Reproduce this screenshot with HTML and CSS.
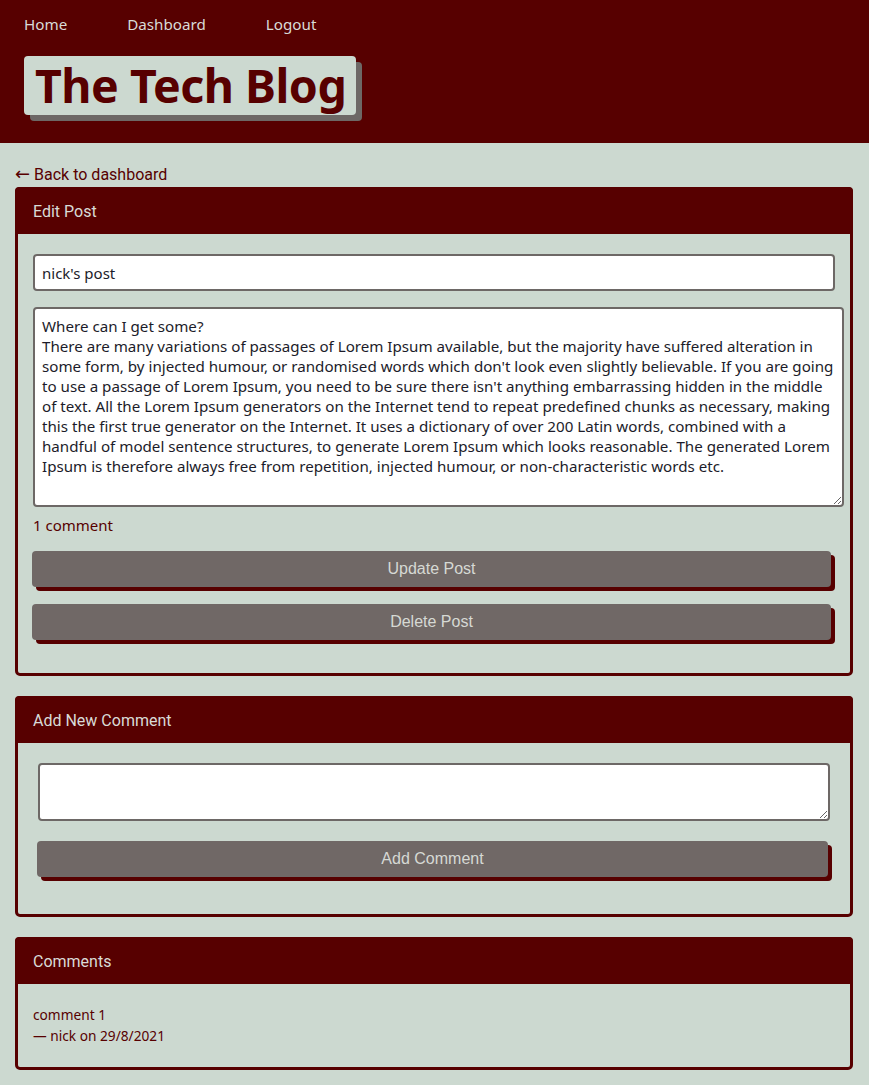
FILE: index.html
```html
<!DOCTYPE html>
<html>
<head>
<meta charset="utf-8">
<link rel="stylesheet" href="styles.css">
</head>
<body>
<header class="site-header">
  <nav class="nav">
    <a href="#" class="nav-link">Home</a>
    <a href="#" class="nav-link">Dashboard</a>
    <a href="#" class="nav-link">Logout</a>
  </nav>
  <h1 class="brand">The Tech Blog</h1>
</header>
<main class="main">
  <a href="#" class="back"><span class="arrow">&larr;</span> Back to dashboard</a>
  <section class="card">
    <div class="card-header">Edit Post</div>
    <div class="card-body edit-body">
      <input class="field" type="text" value="nick's post">
      <textarea class="field post-text">Where can I get some?
There are many variations of passages of Lorem Ipsum available, but the majority have suffered alteration in some form, by injected humour, or randomised words which don't look even slightly believable. If you are going to use a passage of Lorem Ipsum, you need to be sure there isn't anything embarrassing hidden in the middle of text. All the Lorem Ipsum generators on the Internet tend to repeat predefined chunks as necessary, making this the first true generator on the Internet. It uses a dictionary of over 200 Latin words, combined with a handful of model sentence structures, to generate Lorem Ipsum which looks reasonable. The generated Lorem Ipsum is therefore always free from repetition, injected humour, or non-characteristic words etc.</textarea>
      <p class="count">1 comment</p>
      <button class="btn">Update Post</button>
      <button class="btn">Delete Post</button>
    </div>
  </section>
  <section class="card">
    <div class="card-header">Add New Comment</div>
    <div class="card-body comment-body">
      <textarea class="field comment-text"></textarea>
      <button class="btn">Add Comment</button>
    </div>
  </section>
  <section class="card">
    <div class="card-header">Comments</div>
    <div class="card-body list-body">
      <div class="comment">
        <p class="comment-text-line">comment 1</p>
        <p class="comment-meta">&mdash; nick on 29/8/2021</p>
      </div>
    </div>
  </section>
</main>
</body>
</html>
```
FILE: styles.css
```css
* { box-sizing: border-box; }
html, body { margin: 0; padding: 0; }
body {
  background: #ccd9d0;
  font-family: "Noto Sans", "DejaVu Sans", sans-serif;
  color: #570000;
}
.site-header {
  background: #570000;
  height: 143px;
  padding: 13px 24px 0;
}
.nav { display: flex; height: 22px; align-items: center; }
.nav-link {
  color: #d9dbd7;
  text-decoration: none;
  font-size: 15.2px;
  margin-right: 60px;
}
.brand {
  display: inline-block;
  margin: 21px 0 0;
  background: #ccd9d0;
  color: #570000;
  font-size: 46.5px;
  line-height: 59px;
  height: 59px;
  padding: 0 10px 0 11px;
  border-radius: 4px;
  box-shadow: 6px 6px 0 #6d6866;
  letter-spacing: -0.5px;
}
.main { padding: 22px 16px 16px 15px; }
.back {
  display: block;
  font-family: Roboto, sans-serif;
  font-size: 16px;
  color: #570000;
  text-decoration: none;
  line-height: 20px;
  margin-bottom: 2px;
}
.arrow { font-family: "DejaVu Sans", sans-serif; font-size: 18px; line-height: 16px; }
.card {
  border: 3px solid #570000;
  border-radius: 5px;
  margin-bottom: 20px;
}
.card-header {
  background: #570000;
  color: #d9dbd7;
  line-height: 44px;
  margin: -3px -3px 0;
  padding: 3px 18px 0;
  height: 47px;
  font-family: Roboto, sans-serif;
  font-size: 16px;
  border-radius: 4px 4px 0 0;
}
.card-body { padding: 20px 15px; }
.field {
  display: block;
  border: 2px solid #6d6866;
  border-radius: 4px;
  background: #fff;
  font-family: "Noto Sans", sans-serif;
  font-size: 15px;
  color: #1c1c2a;
}
.edit-body input.field {
  width: 802px;
  height: 37px;
  padding: 0 7px;
}
.post-text {
  width: 811px;
  height: 200px;
  margin-top: 16px;
  padding: 7px 7px;
  font-size: 15.15px;
  line-height: 20px;
  resize: vertical;
}
.count {
  margin: 8px 0 16px;
  font-size: 15px;
  line-height: 20px;
}
.btn {
  display: block;
  width: 799px;
  height: 36px;
  margin: 0 0 17px -1px;
  background: #706866;
  color: #d6d9d4;
  border: none;
  border-radius: 4px;
  box-shadow: 4px 4px 0 #570000;
  font-family: "Liberation Sans", Arial, sans-serif;
  font-size: 16px;
  padding: 0;
}
.edit-body { padding-bottom: 16px; }
.comment-body { padding: 20px 20px 20px; }
.comment-text {
  width: 792px;
  height: 58px;
  margin: 0 0 20px;
  resize: vertical;
}
.comment-body .btn { width: 791px; margin-left: -1px; height: 36px; }
.list-body { padding: 20px 15px 21px; }
.comment p { margin: 0; font-size: 13.7px; line-height: 21px; }
```
